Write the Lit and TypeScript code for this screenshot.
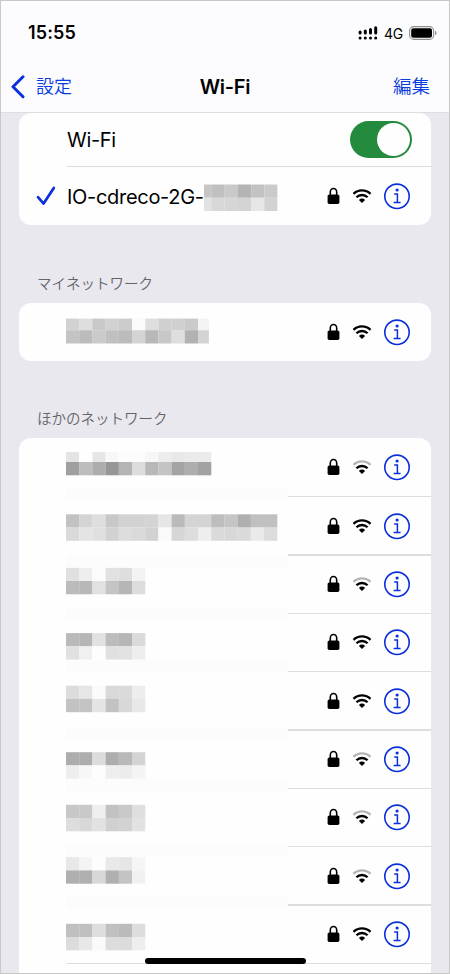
import { LitElement, html, svg, css, nothing } from "lit";
import { customElement, property } from "lit/decorators.js";
import { classMap } from "lit/directives/class-map.js";

interface Mosaic {
  y: number;
  rows: string[];
  heights?: number[];
  edges?: number[];
  band?: [number, number];
}

const CELL = 13.2;

/** Pixelated stand-in for a hidden network name; every pair of hex digits is one grey cell. */
@customElement("masked-name")
export class MaskedName extends LitElement {
  @property({ attribute: false }) mosaic!: Mosaic;

  static styles = css`
    :host { display: block; flex: 1; height: 100%; min-width: 0; }
    svg { display: block; width: 100%; height: 100%; overflow: visible; }
  `;

  render() {
    const { y, rows, heights = [CELL, CELL], edges, band } = this.mosaic;
    let top = y;
    const cells = rows.map((row, r) => {
      const greys = row.split(" ");
      const rowTop = top;
      top += heights[r];
      return greys.map((g, c) => {
        const x0 = edges ? edges[c] : c * CELL;
        const x1 = edges ? edges[c + 1] : (c + 1) * CELL;
        return svg`<rect x=${x0} y=${rowTop} width=${x1 - x0 + 0.1} height=${heights[r] + 0.1} fill=${"#" + g + g + g}></rect>`;
      });
    });
    return html`<svg>
      ${band ? svg`<rect x="0" y=${band[0]} width="222" height=${band[1]} fill="#fcfcfc"></rect>` : nothing}
      ${cells}
    </svg>`;
  }
}

/** Lock, signal strength and info button at the end of a network row. */
@customElement("network-status")
export class NetworkStatus extends LitElement {
  @property({ type: Boolean }) weak = false;

  static styles = css`
    :host { display: flex; align-items: center; flex: none; }
    svg { display: block; }
    .lock { margin-right: 12px; }
    .wifi { margin-right: 11px; }
    .faint { stroke: #b4b4b4; }
  `;

  render() {
    return html`
      <svg class="lock" width="13" height="18" viewBox="0 0 13 18">
        <path d="M3.3 8.4V5a3.2 3.5 0 0 1 6.4 0v3.4" fill="none" stroke="#000" stroke-width="1.6"></path>
        <rect x="0.6" y="7.4" width="11.8" height="9.6" rx="1.7"></rect>
      </svg>
      <svg class="wifi" width="20" height="16" viewBox="0 0 20 16" fill="none" stroke="#000" stroke-width="2.3">
        <path class=${classMap({ faint: this.weak })} d="M1.5 5.9a12.2 12.2 0 0 1 17 0"></path>
        <path d="M4.4 9.3a8 8 0 0 1 11.2 0"></path>
        <path d="M6.9 11.9a4.4 4.4 0 0 1 6.2 0L10 15z" fill="#000" stroke="none"></path>
      </svg>
      <svg width="28" height="28" viewBox="0 0 28 28" fill="none" stroke="#0a2fdc" stroke-width="1.6">
        <circle cx="14" cy="14.3" r="12.2"></circle>
        <path d="M11.2 12h3.2v8.4M10.6 20.5h7" stroke-width="1.5"></path>
        <circle cx="14.1" cy="8" r="1.6" fill="#0a2fdc" stroke="none"></circle>
      </svg>
    `;
  }
}

const CURRENT: Mosaic = {
  y: 17.5,
  edges: [0, 7.3, 20.6, 34, 47.3, 60.3, 73.3],
  rows: ["c6 c0 c9 b4 c2 ca", "e2 d8 d6 d4 e6 d2"],
};

const MINE: Mosaic = {
  y: 15.6,
  heights: [11.6, 13.2],
  edges: [0, 13.2, 26.4, 39.6, 52.8, 66, 79.2, 92.4, 105.6, 118.8, 132, 142.8],
  rows: ["d2 de c8 d2 cc fa de d0 d0 ca f4", "c4 bc ca c0 bc d4 b8 c8 de b2 d4"],
};

const OTHERS: { weak: boolean; mosaic: Mosaic }[] = [
  { weak: true, mosaic: { y: 14, heights: [10, 13.2], band: [50, 13],
    rows: ["e4 fe e6 f8 fd fd f7 ed e8 eb eb", "9f bd ad 96 b4 dc b8 c4 a4 ae a2"] } },
  { weak: false, mosaic: { y: 18.3, band: [58.3, 12.6],
    rows: ["c2 d4 de c8 d2 d2 d4 e6 ba d4 d4 bd c5 af c0 c0", "da e4 e0 d2 dd da d2 fa d6 dd ee da d8 da ea dc"] } },
  { weak: true, mosaic: { y: 12.8, band: [52.6, 13],
    rows: ["e0 ee fc e1 de f3", "bb b8 e1 c4 b6 dd"] } },
  { weak: false, mosaic: { y: 20.1, band: [47.3, 12.6],
    rows: ["ba b6 e2 bc b6 da", "e1 f0 fd e0 e2 ee"] } },
  { weak: false, mosaic: { y: 14.7, band: [56.3, 11.6],
    rows: ["dc e6 fb d9 da ed", "c3 c3 e4 c2 d8 e8"] } },
  { weak: true, mosaic: { y: 22.2, band: [49, 12],
    rows: ["ad ad dc ad b9 d4", "ee f7 fd ee ec f4"] } },
  { weak: true, mosaic: { y: 16.8, band: [56, 13],
    rows: ["c8 c9 ef c2 c9 df", "dd d8 e2 d0 d2 e2"] } },
  { weak: true, mosaic: { y: 11.2, band: [50.6, 13],
    rows: ["e8 f4 fd e9 e6 f5", "b0 b0 d8 b0 c4 f1"] } },
  { weak: false, mosaic: { y: 18.8,
    rows: ["c0 c0 de c0 bb dd", "dc e8 fa dc dc ee"] } },
];

@customElement("app-root")
export class AppRoot extends LitElement {
  static styles = css`
    :host {
      display: block;
      position: relative;
      box-sizing: border-box;
      width: 450px;
      height: 974px;
      overflow: hidden;
      border: 1px solid #c8c8c8;
      background: #e9e8ee;
      color: #000;
      font-family: Inter, "Noto Sans CJK JP", sans-serif;
    }
    svg { display: block; }
    .header {
      box-sizing: border-box;
      height: 112px;
      background: #fcfcfe;
      border-bottom: 1px solid #dedee2;
    }
    .status {
      display: flex;
      align-items: center;
      height: 64px;
      padding: 0 12px 0 27px;
    }
    .time { flex: 1; font-size: 18px; font-weight: 600; letter-spacing: 0.15px; line-height: 24px; }
    .carrier { font-size: 14px; letter-spacing: -0.2px; margin: 0 6px 0 6px; font-weight: 400; }
    .nav {
      display: grid;
      grid-template-columns: 1fr auto 1fr;
      align-items: center;
      height: 43px;
      padding: 0 19px 0 10px;
    }
    .back { display: flex; align-items: center; gap: 11px; }
    .link { color: #0a3be0; font-size: 18px; line-height: 24px; margin-top: -3px; font-family: "Noto Sans CJK JP", sans-serif; font-weight: 350; }
    .edit { text-align: right; font-size: 18.5px; }
    .title { font-size: 20px; font-weight: 600; letter-spacing: -0.25px; line-height: 24px; padding-left: 9px; }
    .card {
      margin: 0 18px;
      background: #fefefe;
      border-radius: 12px;
      overflow: hidden;
    }
    .top { height: 112px; }
    .row { display: flex; align-items: center; box-sizing: border-box; padding-right: 20px; }
    .inset { margin-left: 47px; }
    .toggle-row { height: 54px; margin-left: 48px; padding-right: 19px; border-bottom: 1px solid #dcdce0; justify-content: space-between; }
    .label { font-size: 20px; letter-spacing: -0.3px; line-height: 26px; white-space: nowrap; padding-top: 1px; }
    .toggle { box-sizing: border-box; width: 62px; height: 37px; border-radius: 19px; background: #248a3d; padding: 2px; display: flex; justify-content: flex-end; }
    .knob { width: 33px; height: 33px; border-radius: 50%; background: #fefefe; }
    .current { height: 58px; }
    .check { width: 48px; padding-left: 17px; box-sizing: border-box; flex: none; }
    .name { width: 136.7px; flex: none; letter-spacing: -0.3px; }
    .heading {
      margin: 0 0 0 36px;
      font: 350 14.5px/20px "Noto Sans CJK JP", sans-serif;
      color: #636368;
    }
    .h-mine { padding: 48px 0 9.5px; }
    .h-other { padding: 47.5px 0 9.6px; }
    .mine { height: 58.4px; }
    .others { border-bottom-left-radius: 0; border-bottom-right-radius: 0; height: 540px; }
    .net { height: 58.35px; position: relative; }
    .net::after {
      content: "";
      position: absolute;
      left: 222px;
      right: 0;
      bottom: -1px;
      height: 1.4px;
      background: #dedee1;
    }
    .net:last-child::after { left: 0; }
    .home {
      position: absolute;
      left: 144px;
      top: 957px;
      width: 161px;
      height: 6px;
      border-radius: 3px;
      background: #000;
    }
  `;

  render() {
    return html`
      <div class="header">
        <div class="status">
          <span class="time">15:55</span>
          <svg width="20" height="16" viewBox="0 0 20 16" stroke="#000" stroke-width="3" stroke-linecap="round">
            <path d="M2.1 7.1v.8M7.3 6.1v1.8M12.5 4.6v3.3M17.7 2.7v5.2M2.1 13v.1M7.3 13v.1M12.5 13v.1M17.7 13v.1"></path>
          </svg>
          <span class="carrier">4G</span>
          <svg width="28" height="14" viewBox="0 0 28 14">
            <rect x="0.6" y="0.6" width="24" height="12.8" rx="4" fill="none" stroke="#8e8e90" stroke-width="1.1"></rect>
            <rect x="2.2" y="2.2" width="20.8" height="9.6" rx="2"></rect>
            <path d="M26 4.8q1.6.8 1.6 2.2T26 9.2z" fill="#8e8e90"></path>
          </svg>
        </div>
        <div class="nav">
          <div class="back">
            <svg width="14" height="24" viewBox="0 0 14 24">
              <path d="M12 1.8 2 11.8 12 21.8" fill="none" stroke="#0a2fdc" stroke-width="3" stroke-linecap="round" stroke-linejoin="round"></path>
            </svg>
            <span class="link">設定</span>
          </div>
          <span class="title">Wi-Fi</span>
          <span class="link edit">編集</span>
        </div>
      </div>

      <div class="card top">
        <div class="row toggle-row">
          <span class="label">Wi-Fi</span>
          <div class="toggle"><div class="knob"></div></div>
        </div>
        <div class="row current">
          <div class="check">
            <svg width="20" height="20" viewBox="0 0 20 20">
              <path d="M2 11.2 7.6 17.6 17.8 2" fill="none" stroke="#0a2fdc" stroke-width="2.7" stroke-linecap="round" stroke-linejoin="round"></path>
            </svg>
          </div>
          <span class="label name">IO-cdreco-2G-</span>
          <masked-name .mosaic=${CURRENT}></masked-name>
          <network-status></network-status>
        </div>
      </div>

      <div class="heading h-mine">マイネットワーク</div>
      <div class="card">
        <div class="row inset mine">
          <masked-name .mosaic=${MINE}></masked-name>
          <network-status></network-status>
        </div>
      </div>

      <div class="heading h-other">ほかのネットワーク</div>
      <div class="card others">
        ${OTHERS.map(
          (n) => html`<div class="row inset net">
            <masked-name .mosaic=${n.mosaic}></masked-name>
            <network-status ?weak=${n.weak}></network-status>
          </div>`,
        )}
      </div>
      <div class="home"></div>
    `;
  }
}
